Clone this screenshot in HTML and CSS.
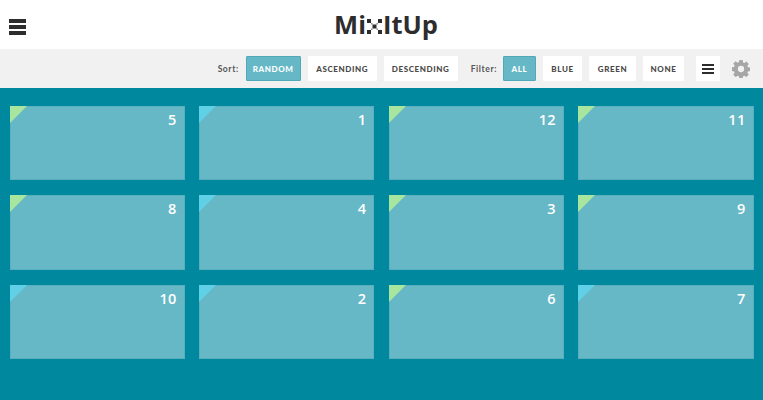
FILE: index.html
```html
<!DOCTYPE html>
<html lang="en">
<head>
  <meta charset="UTF-8" />
  <title>MixItUp</title>
  <link rel="stylesheet" href="styles.css">
</head>
<body>
  <header class="top">
    <div class="menu-icon"><span></span><span></span><span></span></div>
    <div class="logo">Mi<svg class="logo-x" viewBox="0 0 15 15" width="15" height="15" aria-label="x"><path d="M0 0h4v4H0zM11 0h4v4h-4zM5.500 5.500h4v4h-4zM0 11h4v4H0zM11 11h4v4h-4z"/><path opacity=".55" d="M4 4h1.500v1.500H4zM9.500 4H11v1.500H9.500zM4 9.500h1.500V11H4zM9.500 9.500H11V11H9.500z"/></svg>ItUp</div>
  </header>

  <!-- Sort and filter controls -->
  <div class="controls">
    <span class="label sort-label">Sort:</span>
    <button class="btn active btn-random">Random</button>
    <button class="btn btn-asc">Ascending</button>
    <button class="btn btn-desc">Descending</button>
    <span class="label filter-label">Filter:</span>
    <button class="btn active btn-all">All</button>
    <button class="btn btn-blue">Blue</button>
    <button class="btn btn-green">Green</button>
    <button class="btn btn-none">None</button>
    <button class="btn list-btn"><span></span><span></span><span></span></button>
    <svg class="gear" viewBox="0 0 24 24" width="18" height="18">
      <path fill="#a6a6a6" fill-rule="evenodd" d="M9.800 0h4.400l.6 3.200 1.700.7 2.700-1.800 3.100 3.100-1.800 2.700.7 1.700 3.200.6v4.400l-3.200.6-.7 1.700 1.800 2.700-3.100 3.100-2.700-1.800-1.700.7-.6 3.200H9.800l-.6-3.200-1.700-.7-2.700 1.800-3.100-3.100 1.800-2.700-.7-1.700-3.200-.6V9.800l3.200-.6.7-1.700-1.800-2.700 3.100-3.100 2.700 1.800 1.700-.7zM12 7.800a4.200 4.200 0 1 0 0 8.400 4.200 4.200 0 0 0 0-8.400z"/>
    </svg>
  </div>

  <div class="grid">
    <div class="card green"><span class="num">5</span></div>
    <div class="card blue"><span class="num">1</span></div>
    <div class="card green"><span class="num">12</span></div>
    <div class="card green"><span class="num">11</span></div>
    <div class="card green"><span class="num">8</span></div>
    <div class="card blue"><span class="num">4</span></div>
    <div class="card green"><span class="num">3</span></div>
    <div class="card green"><span class="num">9</span></div>
    <div class="card blue"><span class="num">10</span></div>
    <div class="card blue"><span class="num">2</span></div>
    <div class="card green"><span class="num">6</span></div>
    <div class="card blue"><span class="num">7</span></div>
  </div>
</body>
</html>
```

FILE: styles.css
```css
* { box-sizing: border-box; }
body {
  margin: 0;
  height: 400px;
  overflow: hidden;
  display: flex;
  flex-direction: column;
  font-family: 'Lato', sans-serif;
  background: #00889e;
}
.top {
  height: 49px;
  background: #fff;
  display: flex;
  align-items: center;
  justify-content: center;
  position: relative;
}
.menu-icon {
  position: absolute;
  left: 9px;
  top: 19px;
  width: 17px;
  display: flex;
  flex-direction: column;
  gap: 2px;
}
.menu-icon span {
  height: 4px;
  background: #2d2d2d;
}
.logo {
  display: flex;
  align-items: center;
  font-family: 'Open Sans', sans-serif;
  font-weight: 700;
  font-size: 25.500px;
  line-height: 36px;
  color: #2d2d2d;
  margin: -2px 0 0 9px;
}
.logo-x {
  fill: #2d2d2d;
  margin: 5px 1px 0 1px;
}
.controls {
  height: 39px;
  background: #f1f1f1;
  display: flex;
  align-items: center;
  justify-content: flex-end;
  gap: 7px;
  padding-right: 13px;
}
.label {
  font-size: 8.500px;
  font-weight: 700;
  letter-spacing: 0.6px;
  color: #555;
}
.filter-label { margin: 0 -1px 0 6px; }
.btn {
  height: 25px;
  padding: 0;
  border: 0;
  border-radius: 1px;
  background: #fff;
  color: #4a4a4a;
  font-family: inherit;
  font-size: 8px;
  font-weight: 900;
  letter-spacing: 0.6px;
  text-transform: uppercase;
}
.btn-random { width: 55px; }
.btn-asc { width: 69px; }
.btn-desc { width: 74px; }
.btn-all { width: 33px; }
.btn-blue { width: 39px; }
.btn-green { width: 47px; }
.btn-none { width: 41px; }
.btn.active {
  background: #66b8c6;
  color: #fff;
  border: 1px solid #4fa9b7;
}
.list-btn {
  width: 24px;
  margin-left: 5px;
  display: flex;
  flex-direction: column;
  justify-content: center;
  align-items: center;
  gap: 2px;
}
.list-btn span {
  width: 12px;
  height: 2px;
  background: #2d2d2d;
}
.gear { margin-left: 5px; }
.grid {
  flex: 1;
  display: grid;
  grid-template-columns: repeat(4, 1fr);
  grid-auto-rows: 74.500px;
  gap: 15px 14.500px;
  padding: 17.500px 9.500px 0;
  align-content: start;
}
.card {
  position: relative;
  background: #66b8c6;
  border: 1px solid #5aafbe;
  color: #fff;
  text-align: right;
  padding: 2px 7px 0 0;
}
.card::before {
  content: '';
  position: absolute;
  left: -1px;
  top: -1px;
  border-style: solid;
  border-width: 17px 17px 0 0;
  border-color: transparent;
}
.card.green::before { border-top-color: #a8e6a0; }
.card.blue::before { border-top-color: #5fd0e6; }
.num {
  font-family: 'Open Sans', sans-serif;
  font-size: 14.500px;
  font-weight: 600;
  letter-spacing: 0.3px;
}
```
